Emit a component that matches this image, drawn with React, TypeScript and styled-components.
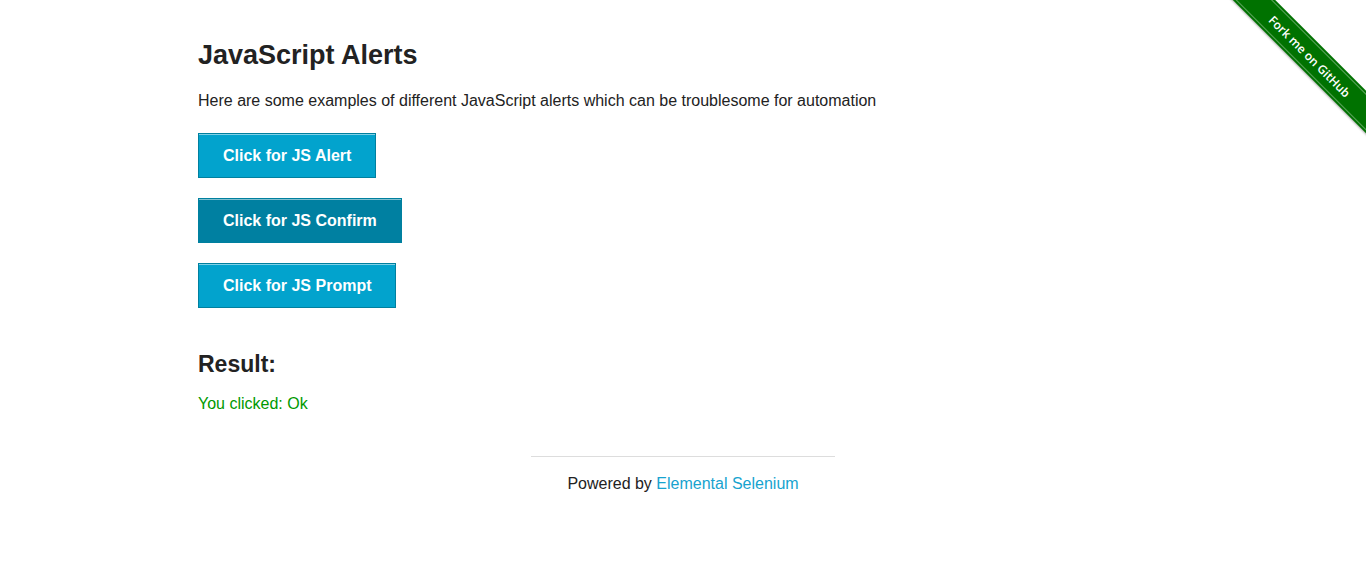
import React from "react";
import styled, { createGlobalStyle } from "styled-components";

const Global = createGlobalStyle`
  html, body { margin: 0; padding: 0; background: #fff; }
  body { font-family: "Liberation Sans", Arial, sans-serif; color: #222; }
  * { box-sizing: border-box; }
`;

const Page = styled.div`
  position: relative;
  min-height: 569px;
  overflow: hidden;
`;

const Row = styled.div`
  max-width: 1000px;
  margin: 0 auto;
  padding: 36px 15px 0;
`;

const Title = styled.h3`
  font-size: 27px;
  line-height: 38px;
  font-weight: bold;
  margin: 0 0 14px;
  color: #222;
`;

const Text = styled.p<{ $color?: string; $gap?: number }>`
  font-size: 16px;
  line-height: 26px;
  margin: 0 0 ${(p) => (p.$gap ?? 20)}px;
  color: ${(p) => p.$color || "#222"};
`;

const List = styled.ul`
  list-style: none;
  margin: 0 0 40px;
  padding: 0;
  display: flex;
  flex-direction: column;
  align-items: flex-start;
  gap: 20px;
`;

const Button = styled.button<{ $active?: boolean }>`
  font-family: "Liberation Sans", Arial, sans-serif;
  font-size: 16px;
  font-weight: bold;
  line-height: 19px;
  color: #fff;
  padding: 12px 24px;
  background: ${(p) => (p.$active ? "#0080a1" : "#02a3cd")};
  border: 1px solid #00809f;
  box-shadow: inset 0 1px 0 rgba(255, 255, 255, 0.5);
  border-radius: 0;
  cursor: pointer;
  margin: 0;
`;

const Sub = styled.h4`
  font-size: 23px;
  line-height: 32px;
  font-weight: bold;
  margin: 0 0 11px;
  color: #222;
`;

const Footer = styled.div`
  width: 334px;
  margin: 0 auto;
  padding: 0 15px;
  text-align: center;
`;

const Rule = styled.hr`
  border: 0;
  border-top: 1px solid #ddd;
  margin: 39px 0 14px;
  height: 0;
`;

const FooterText = styled.div`
  font-size: 16px;
  line-height: 26px;
  color: #222;
`;

const Link = styled.a`
  color: #17a3cf;
  text-decoration: none;
`;

const RibbonBox = styled.div`
  position: absolute;
  top: 0;
  right: 0;
  width: 149px;
  height: 149px;
  overflow: hidden;
  pointer-events: none;
`;

const Ribbon = styled.a`
  position: absolute;
  left: -17px;
  top: 41px;
  width: 220px;
  height: 30px;
  background: #007200;
  transform: rotate(45deg);
  display: flex;
  align-items: center;
  justify-content: center;
  text-decoration: none;
  box-shadow: 0 1px 2px rgba(0, 0, 0, 0.3);
`;

const RibbonInner = styled.span`
  display: flex;
  align-items: center;
  justify-content: center;
  width: 100%;
  height: 26px;
  border-top: 1px solid rgba(255, 255, 255, 0.35);
  border-bottom: 1px solid rgba(255, 255, 255, 0.35);
  color: #fff;
  font-family: "Open Sans", "Liberation Sans", sans-serif;
  font-weight: 600;
  font-size: 12px;
`;

export default function App() {
  return (
    <Page>
      <Global />
      <Row>
        <Title>JavaScript Alerts</Title>
        <Text $gap={19}>Here are some examples of different JavaScript alerts which can be troublesome for automation</Text>
        <List>
          <li><Button>Click for JS Alert</Button></li>
          <li><Button $active>Click for JS Confirm</Button></li>
          <li><Button>Click for JS Prompt</Button></li>
        </List>
        <Sub>Result:</Sub>
        <Text $color="#009900">You clicked: Ok</Text>
      </Row>
      <Footer>
        <Rule />
        <FooterText>
          Powered by <Link href="#">Elemental Selenium</Link>
        </FooterText>
      </Footer>
      <RibbonBox>
        <Ribbon href="#">
          <RibbonInner>Fork me on GitHub</RibbonInner>
        </Ribbon>
      </RibbonBox>
    </Page>
  );
}
